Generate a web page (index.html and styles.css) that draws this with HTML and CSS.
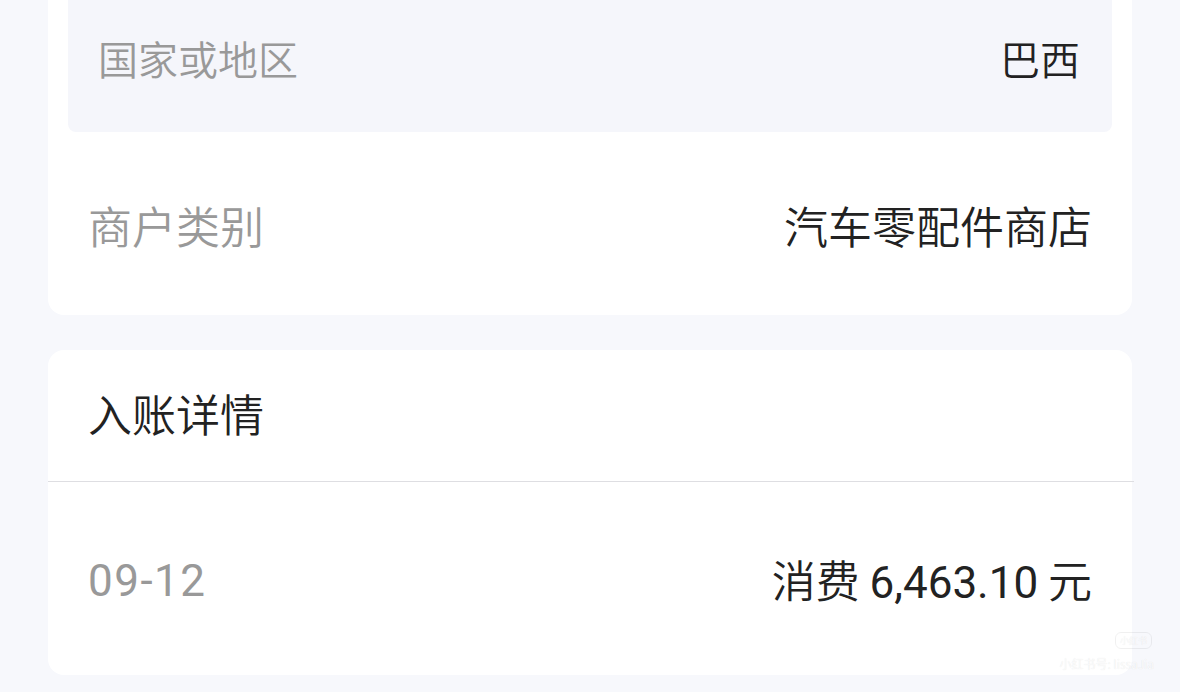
FILE: index.html
```html
<!DOCTYPE html>
<html lang="zh-CN">
<head>
<meta charset="utf-8">
<link rel="stylesheet" href="styles.css">
</head>
<body>
<div class="page">
  <section class="card card-top">
    <div class="inner-box">
      <span class="label label-sm">国家或地区</span>
      <span class="value value-sm">巴西</span>
    </div>
    <div class="row row-merchant">
      <span class="label">商户类别</span>
      <span class="value">汽车零配件商店</span>
    </div>
  </section>
  <section class="card card-detail">
    <div class="card-head">入账详情</div>
    <div class="divider"></div>
    <div class="row row-entry">
      <span class="label num date">09-12</span>
      <span class="value">消费 <span class="num">6,463.10</span> 元</span>
    </div>
  </section>
  <div class="watermark">
    <span class="wm-badge">小红书</span>
    <span class="wm-text">小红书号: lissaJia</span>
  </div>
</div>
</body>
</html>
```
FILE: styles.css
```css
html, body {
  margin: 0;
  padding: 0;
}
body {
  background: #f7f8fc;
  font-family: "Noto Sans CJK SC", "Noto Sans", sans-serif;
  font-weight: 350;
  width: 1180px;
  height: 692px;
  overflow: hidden;
}
.page {
  position: relative;
  padding: 0 48px;
  height: 692px;
}
.card {
  background: #ffffff;
  border-radius: 16px;
}
.card-top {
  border-radius: 0 0 16px 16px;
}
.inner-box {
  margin: 0 20px;
  height: 132px;
  background: #f5f6fb;
  border-radius: 0 0 8px 8px;
  display: flex;
  align-items: center;
  justify-content: space-between;
  padding: 0 32px 16px 30px;
  box-sizing: border-box;
}
.label {
  color: #999999;
  font-size: 44px;
  line-height: 1;
}
.value {
  color: #222222;
  font-size: 44px;
  line-height: 1;
}
.label-sm, .value-sm {
  font-size: 40px;
}
.num {
  font-family: "Roboto", "Noto Sans CJK SC", sans-serif;
  font-weight: 400;
}
.date {
  letter-spacing: 1.5px;
}
.row {
  display: flex;
  align-items: center;
  justify-content: space-between;
  padding: 0 40px;
}
.row-merchant {
  height: 183px;
  padding-top: 2px;
  box-sizing: border-box;
}
.card-detail {
  margin-top: 35px;
}
.card-head {
  height: 131px;
  display: flex;
  align-items: center;
  padding: 0 40px 6px;
  box-sizing: border-box;
  font-size: 44px;
  color: #222222;
}
.divider {
  height: 1px;
  background: #dedee2;
  margin-right: -2px;
}
.row-entry {
  height: 193px;
  padding-top: 4px;
  box-sizing: border-box;
}
.watermark {
  position: absolute;
  right: 26px;
  bottom: 20px;
  display: flex;
  flex-direction: column;
  align-items: flex-end;
  gap: 6px;
  color: rgba(255, 255, 255, 0.85);
  font-size: 12px;
  text-shadow: 0 0 1px rgba(0, 0, 0, 0.12);
}
.wm-badge {
  font-size: 9px;
  border: 1px solid rgba(0, 0, 0, 0.06);
  border-radius: 6px;
  padding: 1px 4px;
  margin-right: 2px;
}
```
